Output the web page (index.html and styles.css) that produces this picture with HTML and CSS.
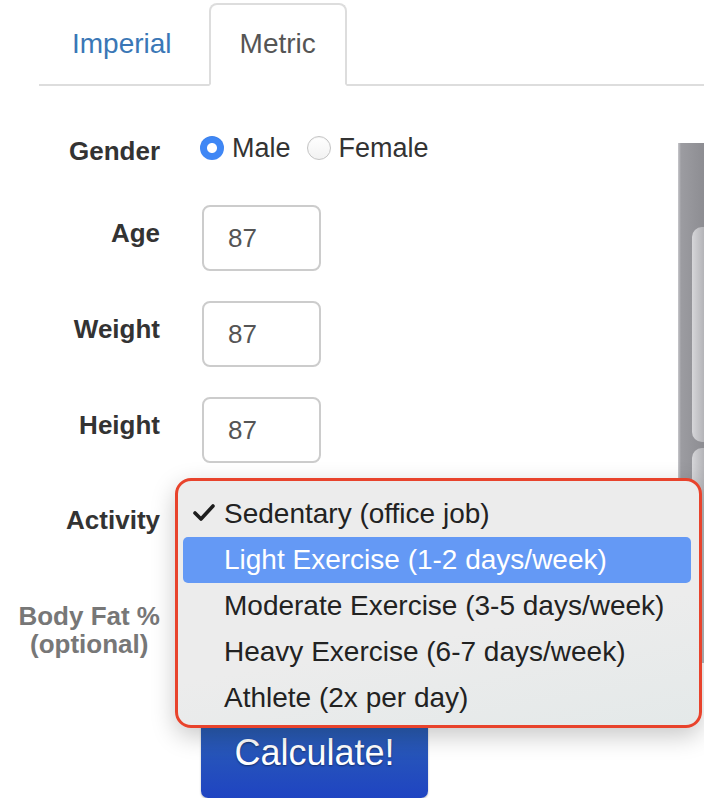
FILE: index.html
```html
<!DOCTYPE html>
<html lang="en">
<head>
    <meta charset="UTF-8">
    <meta name="viewport" content="width=device-width, initial-scale=1.0">
    <title>Calorie Calculator</title>
    <link rel="stylesheet" href="styles.css">
</head>
<body>
    <ul class="tabs">
        <li class="tab"><a href="#">Imperial</a></li>
        <li class="tab active"><a href="#">Metric</a></li>
    </ul>

    <div class="content">
        <form class="calc-form">
            <div class="row gender-row">
                <label class="field-label">Gender</label>
                <div class="radios">
                    <label class="radio"><input type="radio" name="gender" checked> Male</label>
                    <label class="radio"><input type="radio" name="gender"> Female</label>
                </div>
            </div>
            <div class="row">
                <label class="field-label" for="age">Age</label>
                <input class="num-input" type="text" id="age" value="87">
            </div>
            <div class="row">
                <label class="field-label" for="weight">Weight</label>
                <input class="num-input" type="text" id="weight" value="87">
            </div>
            <div class="row">
                <label class="field-label" for="height">Height</label>
                <input class="num-input" type="text" id="height" value="87">
            </div>
            <div class="row">
                <label class="field-label" for="activity">Activity</label>
                <div class="select-box" id="activity"></div>
            </div>
            <div class="row fat-row">
                <label class="field-label muted" for="fat"><span>Body Fat %</span><span>(optional)</span></label>
                <input class="num-input" type="text" id="fat">
            </div>
            <div class="row">
                <span></span>
                <button type="button" class="calc-btn">Calculate!</button>
            </div>

            <!-- open native select menu -->
            <ul class="menu">
                <li class="menu-item">
                    <svg class="check" width="22" height="18" viewBox="0 0 22 18"><polyline points="2,9 8,15 20,2" fill="none" stroke="#1e1e1e" stroke-width="3.6" stroke-linecap="round" stroke-linejoin="round"/></svg>
                    Sedentary (office job)
                </li>
                <li class="menu-item selected">Light Exercise (1-2 days/week)</li>
                <li class="menu-item">Moderate Exercise (3-5 days/week)</li>
                <li class="menu-item">Heavy Exercise (6-7 days/week)</li>
                <li class="menu-item">Athlete (2x per day)</li>
            </ul>
        </form>

        <div class="side-panel">
            <div class="side-slot"></div>
            <div class="side-slot"></div>
        </div>
    </div>
</body>
</html>
```

FILE: styles.css
```css
body {
    margin: 0;
    font-family: 'Liberation Sans', Arial, Helvetica, sans-serif;
    color: #333;
    background: #fff;
    overflow: hidden;
}
.tabs {
    list-style: none;
    display: flex;
    margin: 3px 0 0 39px;
    padding: 0;
    border-bottom: 2px solid #ddd;
}
.tab {
    margin-right: 4px;
    margin-bottom: -2px;
}
.tab a {
    display: block;
    padding: 23px 31px 24px;
    font-size: 28px;
    line-height: 32px;
    color: #3a77b6;
    text-decoration: none;
    border: 2px solid transparent;
    border-radius: 8px 8px 0 0;
}
.tab.active a {
    color: #555;
    background: #fff;
    border-color: #ddd;
    border-bottom-color: #fff;
    padding: 23px 29px 24px;
}
.content {
    display: flex;
}
.calc-form {
    position: relative;
    flex: 1;
    padding-top: 39px;
    display: flex;
    flex-direction: column;
    gap: 30px;
}
.row {
    display: grid;
    grid-template-columns: 160px auto;
    column-gap: 42px;
    align-items: center;
    justify-items: start;
}
.field-label {
    justify-self: end;
    font-size: 26px;
    font-weight: bold;
    line-height: 28px;
    text-align: right;
    margin-bottom: 10px;
}
.field-label.muted {
    color: #777;
    display: flex;
    flex-direction: column;
    align-items: center;
}
.gender-row {
    height: 50px;
}
.gender-row .field-label {
    margin-bottom: 0;
    margin-top: 2px;
}
.radios {
    display: flex;
    gap: 16px;
    margin-left: -2px;
    margin-top: -4px;
}
.radio {
    display: flex;
    align-items: center;
    gap: 8px;
    font-size: 27px;
    color: #333;
}
.radio input {
    appearance: none;
    -webkit-appearance: none;
    margin: 0;
    width: 24px;
    height: 24px;
    border-radius: 50%;
    border: 1px solid #c4c4c4;
    background: linear-gradient(#fff, #f2f2f2);
    box-shadow: inset 0 1px 1px rgba(0, 0, 0, 0.05);
}
.radio input:checked {
    border: none;
    background: radial-gradient(circle, #fff 0, #fff 4.5px, #3f87f5 5.5px);
}
.num-input {
    box-sizing: border-box;
    width: 119px;
    height: 66px;
    border: 2px solid #ccc;
    border-radius: 8px;
    padding: 0 0 0 24px;
    font-family: inherit;
    font-size: 26px;
    color: #555;
    outline: none;
}
.select-box {
    width: 300px;
    height: 64px;
    border: 2px solid #ccc;
    border-radius: 8px;
    box-sizing: border-box;
}
.fat-row {
    align-items: start;
}
.fat-row .field-label {
    margin: 15px 0 0;
}
.calc-btn {
    margin-top: 32px;
    margin-left: -1px;
    width: 227px;
    height: 78px;
    padding: 0 0 13px;
    border: none;
    border-radius: 7px;
    background: linear-gradient(#2c61b4, #1f44c2);
    color: #fff;
    font-family: inherit;
    font-size: 36px;
    text-shadow: 0 1px 2px rgba(0, 0, 0, 0.45);
    box-shadow: 0 1px 2px rgba(0, 0, 0, 0.3);
}
.menu {
    position: absolute;
    left: 175px;
    top: 392px;
    width: 527px;
    height: 250px;
    box-sizing: border-box;
    margin: 0;
    padding: 10px 8px 0 5px;
    list-style: none;
    border: 3.5px solid #e8432c;
    border-radius: 16px;
    background: linear-gradient(170deg, #ececec 60%, #e4e9e9);
    box-shadow: 0 8px 24px rgba(0, 0, 0, 0.22);
}
.menu-item {
    position: relative;
    height: 46px;
    line-height: 46px;
    padding-left: 41px;
    font-size: 28px;
    color: #222;
    border-radius: 5px;
}
.menu-item.selected {
    background: #6499f5;
    color: #fff;
}
.check {
    position: absolute;
    left: 10px;
    top: 13px;
}
.side-panel {
    width: 26px;
    margin-top: 57px;
    height: 520px;
    padding-top: 84px;
    box-sizing: border-box;
    background: linear-gradient(90deg, #c8c8cc 0, #9c9ca1 3px, #8d8d92);
    display: flex;
    flex-direction: column;
    align-items: flex-end;
    gap: 6px;
}
.side-slot {
    width: 12px;
    height: 230px;
    border-radius: 10px 0 0 10px;
    background: linear-gradient(90deg, #d6d6d9, #b4b4b8);
}
```
